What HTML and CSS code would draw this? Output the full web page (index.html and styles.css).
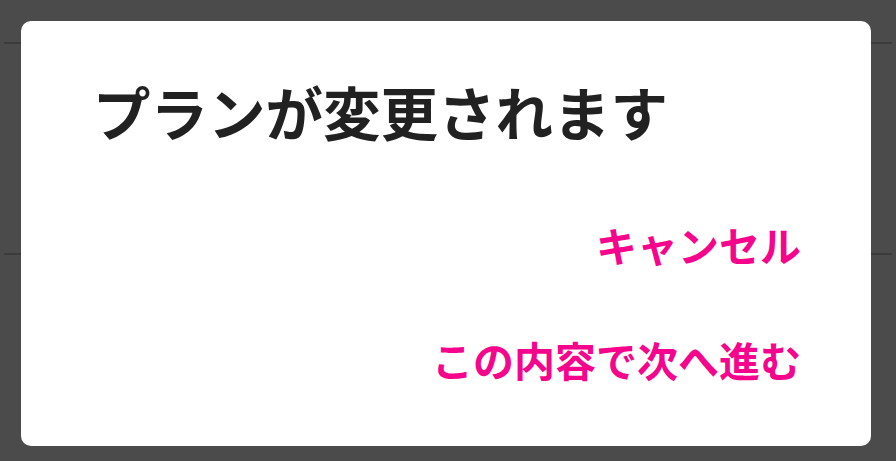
FILE: index.html
```html
<!DOCTYPE html>
<html lang="ja">
<head>
<meta charset="utf-8">
<link rel="stylesheet" href="styles.css">
</head>
<body>
<div class="page">
  <div class="row row-top"></div>
  <div class="row row-mid"></div>
  <div class="row row-rest"></div>
</div>
<div class="dialog">
  <h1 class="title">プランが変更されます</h1>
  <div class="actions">
    <button class="btn">キャンセル</button>
    <button class="btn">この内容で次へ進む</button>
  </div>
</div>
</body>
</html>
```

FILE: styles.css
```css
html, body {
  margin: 0;
  padding: 0;
}
body {
  width: 896px;
  height: 461px;
  background: #4b4b4b;
  overflow: hidden;
  font-family: "Noto Sans CJK JP", "Noto Sans", sans-serif;
  position: relative;
}
.page {
  display: flex;
  flex-direction: column;
  padding: 0 4px;
}
.row {
  border-bottom: 2px solid #3b3b3b;
}
.row-top { height: 42px; }
.row-mid { height: 209px; }
.row-rest { border-bottom: none; }
.dialog {
  position: absolute;
  left: 21px;
  top: 21px;
  width: 850px;
  height: 425px;
  box-sizing: border-box;
  background: #ffffff;
  border-radius: 10px;
  padding: 58px 70px 0 72px;
  display: flex;
  flex-direction: column;
}
.title {
  margin: 0;
  font-size: 57.5px;
  line-height: 64px;
  font-weight: 700;
  color: #212121;
}
.actions {
  display: flex;
  flex-direction: column;
  align-items: flex-end;
  gap: 67px;
  margin-top: 77px;
}
.btn {
  border: none;
  background: none;
  padding: 0;
  margin: 0;
  font-family: inherit;
  font-size: 41px;
  line-height: 48px;
  font-weight: 700;
  color: #f5058c;
}
```
